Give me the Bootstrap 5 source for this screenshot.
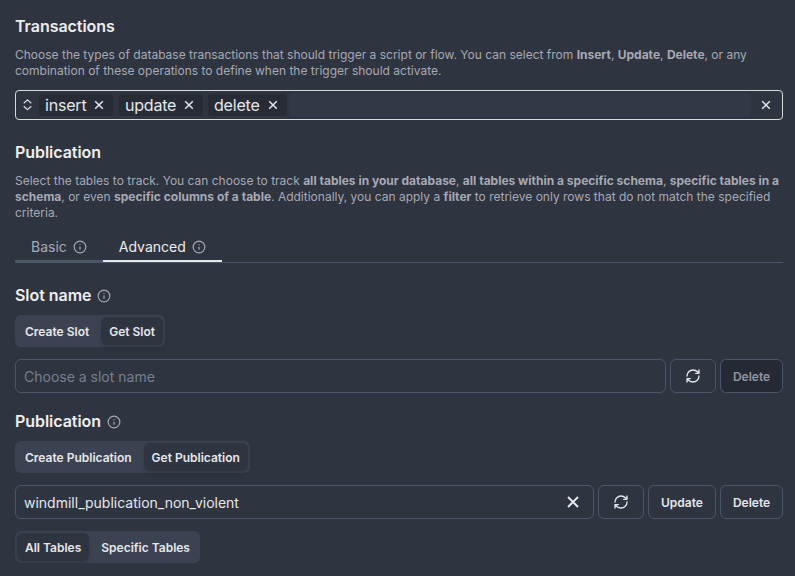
<!DOCTYPE html>
<html lang="en" data-bs-theme="dark">
<head>
<meta charset="utf-8">
<meta name="viewport" content="width=device-width, initial-scale=1">
<title>Trigger settings</title>
<link href="https://cdn.jsdelivr.net/npm/bootstrap@5.3.0/dist/css/bootstrap.min.css" rel="stylesheet">
<style>
  body { background: #2e3440; color: #eceff4; font-family: Inter, sans-serif; font-size: 14px; overflow: hidden; }
  main { padding: 14px 12px 0 15px; }
  h2 { font-size: 16px; line-height: 24px; font-weight: 600; color: #eeeeee; margin: 0; letter-spacing: -.05px; }
  svg { display: block; fill: none; stroke: currentColor; stroke-width: 2; stroke-linecap: round; stroke-linejoin: round; flex: none; }
  .desc { font-size: 12px; line-height: 16px; color: #a8a9b4; margin: 9px 0 11px; }
  .desc b { font-weight: 700; }
  .multi { height: 30px; border: 1px solid #d8dad9; border-radius: 4px; font-size: 16px; line-height: 22px; letter-spacing: -.2px; color: #e5e7eb; }
  .multi .expand { margin: 0 3px 0 4px; }
  .pick { height: 22px; background: #272b36; border-radius: 4px; padding: 0 6px; margin: 0 5px 0 0; justify-content: space-between; }
  .pick-insert { width: 74px; margin-right: 6px; } .pick-update { width: 84px; } .pick-delete { width: 79px; }
  .multi input { height: 24px; min-width: 0; border: 0; background: #323845; margin-left: -2px; }
  .multi .clear { margin: 0 8px 0 8px; }
  .tabs-line { height: 31px; border-bottom: 1px solid #4c566a; }
  .tab-item { height: 30px; padding: 0 16px; line-height: 28px; border-bottom: 2px solid #4c566a; color: #a8a9b4; gap: 6px; }
  .tab-item span { padding-top: 2px; line-height: 14px; }
  .tab-item svg { margin-top: 2px; }
  .tab-item.current { border-color: #e5e7eb; color: #eeeeee; }
  .info { color: #a8a9b4; }
  .title-row { gap: 6px; }
  .title-row svg { margin-top: 2px; }
  .toggle { background: #3b4252; border-radius: 6px; height: 32px; padding: 2px; font-size: 12px; font-weight: 600; }
  .toggle button { border: 0; background: none; color: #e5e7eb; font-weight: 600; height: 28px; padding: 2px 8px 0; border-radius: 6px; }
  .toggle button.on { background: #2e3440; box-shadow: 0 2px 4px rgba(0,0,0,.12); }
  .gap-row { margin: 12px 0; }
  .field { height: 34px; border: 1px solid #4c566a; border-radius: 6px; padding: 0 8px; color: #e5e7eb; line-height: 34px; min-width: 0; }
  .field.blank { color: #76808f; }
  .field svg { margin: 10px 6px 0 0; }
  .act { height: 34px; border: 1px solid #4c566a; border-radius: 6px; background: none; color: #e5e7eb; font-size: 12px; font-weight: 600; padding: 1px 0 0; }
  .act.off { background: #242933; color: #9496a1; }
  .w-icon { width: 46px; padding: 0; } .w-del { width: 63px; } .w-upd { width: 68px; }
</style>
</head>
<body>
<svg class="d-none">
  <symbol id="info" viewBox="0 0 24 24"><circle cx="12" cy="12" r="10"/><path d="M12 16v-4M12 8h.01"/></symbol>
  <symbol id="x" viewBox="0 0 16 16"><path style="stroke-width:1.5;stroke-linecap:butt" d="m4.200 4.200 7.600 7.600M11.800 4.200l-7.600 7.600"/></symbol>
  <symbol id="cross" viewBox="0 0 12 12"><path style="stroke-width:2;stroke-linecap:butt" d="m1 1 10 10M11 1 1 11"/></symbol>
  <symbol id="refresh" viewBox="0 0 24 24"><path d="M3 12a9 9 0 0 1 9-9 9.75 9.75 0 0 1 6.74 2.74L21 8M21 3v5h-5M21 12a9 9 0 0 1-9 9 9.75 9.75 0 0 1-6.74-2.74L3 16M8 16H3v5"/></symbol>
</svg>
<main>
  <section>
    <h2>Transactions</h2>
    <p class="desc">Choose the types of database transactions that should trigger a script or flow. You can select from <b>Insert</b>, <b>Update</b>, <b>Delete</b>, or any combination of these operations to define when the trigger should activate.</p>
    <div class="multi d-flex align-items-center">
      <svg class="expand" width="16" height="16" viewBox="0 0 16 16"><path style="stroke-width:1.1" d="M4 6 7.500 2.800 11 6M4 9.500 7.500 12.700 11 9.500"/></svg>
      <span class="pick pick-insert d-flex align-items-center">insert <svg width="16" height="16"><use href="#x"/></svg></span>
      <span class="pick pick-update d-flex align-items-center">update <svg width="16" height="16"><use href="#x"/></svg></span>
      <span class="pick pick-delete d-flex align-items-center">delete <svg width="16" height="16"><use href="#x"/></svg></span>
      <input class="flex-fill" aria-label="Transactions">
      <svg class="clear" width="16" height="16"><use href="#x"/></svg>
    </div>
  </section>

  <section class="mt-3 pt-1">
    <h2>Publication</h2>
    <p class="desc">Select the tables to track. You can choose to track <b>all tables in your database</b>, <b>all tables within a specific schema</b>, <b>specific tables in a schema</b>, or even <b>specific columns of a table</b>. Additionally, you can apply a <b>filter</b> to retrieve only rows that do not match the specified criteria.</p>
    <div class="tabs-line d-flex">
      <div class="tab-item d-flex align-items-center"><span>Basic</span><svg class="info" width="14" height="14"><use href="#info"/></svg></div>
      <div class="tab-item current d-flex align-items-center"><span>Advanced</span><svg class="info" width="14" height="14"><use href="#info"/></svg></div>
    </div>
  </section>

  <section class="mt-3 pt-1">
    <div class="title-row d-flex align-items-center"><h2>Slot name</h2><svg class="info" width="14" height="14"><use href="#info"/></svg></div>
    <div class="toggle d-inline-flex mt-2 align-top"><button>Create Slot</button><button class="on ms-1">Get Slot</button></div>
    <div class="gap-row d-flex gap-1">
      <div class="field blank flex-fill">Choose a slot name</div>
      <button class="act w-icon d-flex align-items-center justify-content-center"><svg width="16" height="16"><use href="#refresh"/></svg></button>
      <button class="act off w-del">Delete</button>
    </div>
  </section>

  <section class="mt-3">
    <div class="title-row d-flex align-items-center"><h2>Publication</h2><svg class="info" width="14" height="14"><use href="#info"/></svg></div>
    <div class="toggle d-inline-flex mt-2 align-top"><button>Create Publication</button><button class="on ms-1">Get Publication</button></div>
    <div class="gap-row d-flex gap-1">
      <div class="field flex-fill d-flex justify-content-between">windmill_publication_non_violent<svg width="12" height="12"><use href="#cross"/></svg></div>
      <button class="act w-icon d-flex align-items-center justify-content-center"><svg width="16" height="16"><use href="#refresh"/></svg></button>
      <button class="act w-upd">Update</button>
      <button class="act w-del">Delete</button>
    </div>
    <div class="toggle d-inline-flex align-top"><button class="on">All Tables</button><button class="ms-1">Specific Tables</button></div>
  </section>
</main>
<script src="https://cdn.jsdelivr.net/npm/bootstrap@5.3.0/dist/js/bootstrap.bundle.min.js"></script>
</body>
</html>
